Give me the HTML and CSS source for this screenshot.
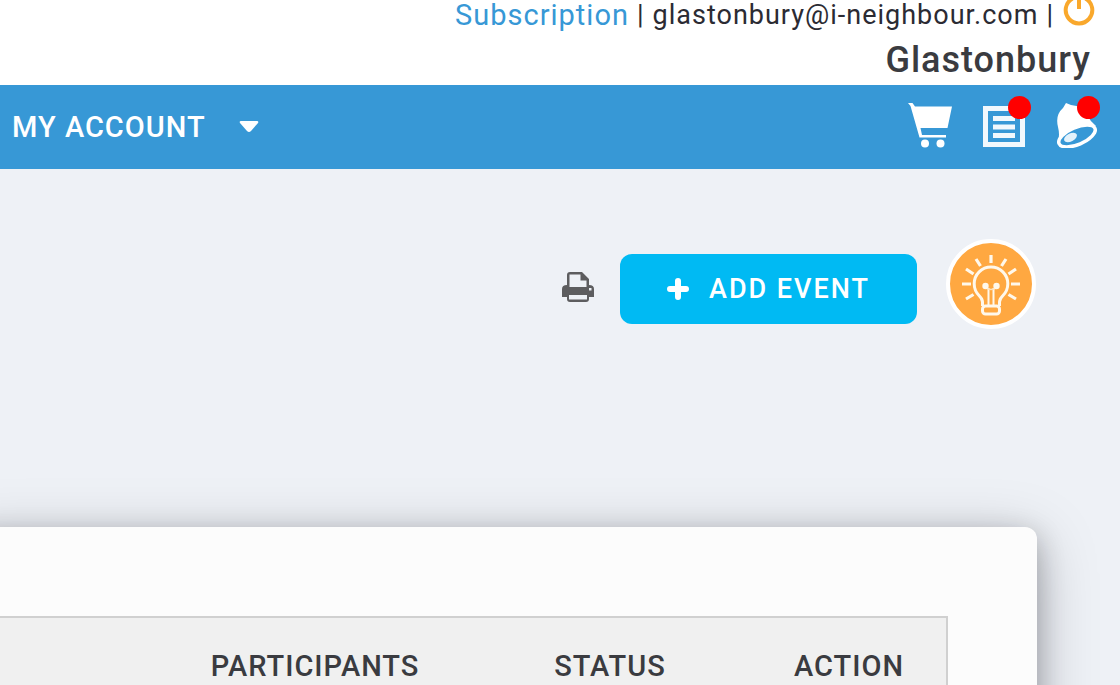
FILE: index.html
```html
<!DOCTYPE html>
<html lang="en">
<head>
<meta charset="utf-8">
<title>Events</title>
<link rel="stylesheet" href="styles.css">
</head>
<body>
<header class="header">
  <div class="user-line">
    <a class="link" href="#">Subscription</a>
    <span>|</span>
    <span>glastonbury@i-neighbour.com</span>
    <span>|</span>
    <button class="icon-button power" aria-label="Log out">
      <svg width="34" height="34" viewBox="0 0 34 34" fill="none" stroke="#f9a82c" stroke-width="4"><path d="M10.5 6.5A13.3 13.3 0 1 0 23.500 6.500M17 1V17"/></svg>
    </button>
  </div>
  <div class="site-name">Glastonbury</div>
</header>
<nav class="navbar">
  <button class="account">MY ACCOUNT
    <svg width="20" height="12" viewBox="0 0 20 12" fill="#fff"><path d="M2 0H18Q20 0 19 2L12 10Q10 12 8 10L1 2Q0 0 2 0Z"/></svg>
  </button>
  <div class="nav-icons">
    <button class="icon-button" aria-label="Cart">
      <svg width="44" height="46" viewBox="0 0 44 46"><path fill="#fff" d="M0 1H4.500L7 4.500H44L39.500 26H12.500L14 33H38V35.500H11.500L2.500 4Z"/><circle cx="17" cy="41.500" r="4" fill="#fff"/><circle cx="32.500" cy="41.500" r="4" fill="#fff"/></svg>
    </button>
    <button class="icon-button" aria-label="News">
      <svg width="42" height="46" viewBox="0 0 42 46"><path fill="none" stroke="#f1f8fd" stroke-width="5" d="M2.500 6.500H39.500V42.500H2.500Z"/><path stroke="#f1f8fd" stroke-width="5" d="M10 16.500H32M10 25H32M10 33.500H32"/></svg>
      <i class="dot"></i>
    </button>
    <button class="icon-button" aria-label="Notifications">
      <svg width="42" height="46" viewBox="0 0 42 46"><path fill="#fff" d="M7 6L10 1L15 3Q27 4 31 13Q34 19 40 24Q36 23 28 26Q11 29 2 39Q4 33 2 25Q-1 13 7 6Z"/><ellipse cx="21" cy="34" rx="19.500" ry="8.500" transform="rotate(-23 21 34)" fill="#3798d6" stroke="#fff" stroke-width="3.500"/><ellipse cx="14.500" cy="35.500" rx="7" ry="4" transform="rotate(-28 14.500 35.500)" fill="#e4f2fb"/></svg>
      <i class="dot dot-inset"></i>
    </button>
  </div>
</nav>
<main class="main">
  <div class="toolbar">
    <button class="icon-button print" aria-label="Print">
      <svg width="32" height="30" viewBox="0 0 32 30"><path fill="#5d5d5f" fill-rule="evenodd" d="M5 13V3Q5 0 8 0H20L27 7V13Q32 13 32 17V25H27V27Q27 30 24 30H8Q5 30 5 27V25H0V17Q0 13 5 13ZM7.500 2.500V15H24.500V8.500H18.500V2.500ZM7 23V27.500H25V23ZM27 16V18.500H29.500V16Z"/></svg>
    </button>
    <button class="add">
      <svg width="22" height="22" viewBox="0 0 22 22"><path stroke="#fff" stroke-width="6" stroke-linecap="round" d="M11 3V19M3 11H19"/></svg>
      ADD EVENT
    </button>
    <button class="icon-button tip" aria-label="Tips">
      <svg width="90" height="90" viewBox="0 0 90 90" fill="none" stroke="#fff8eb" stroke-width="3"><circle cx="45" cy="45" r="43" fill="#ffa841" stroke="#fff" stroke-width="4"/><path d="M36.500 67V63Q36.500 60 33 56.500A16.800 16.800 0 1 1 57 56.500Q53.500 60 53.500 63V67"/><rect x="36.500" y="67" width="17" height="8" rx="3"/><path stroke-width="2" d="M42.500 66V49M47.500 66V49"/><path stroke-width="1.500" stroke="#ffe0b8" d="M38 48Q45 53 52 48"/><g fill="#fff8eb" stroke="none"><circle cx="39.500" cy="47" r="3.200"/><circle cx="50.500" cy="47" r="3.200"/></g><path stroke-width="3.200" d="M45 16V24M30 20L34.500 27M60 20L55.500 27M20 30L27.500 35M70 30L62.500 35M16 45H25M65 45H74M20 60L27.500 55.500M70 60L62.500 55.500"/></svg>
    </button>
  </div>
  <section class="card">
    <table class="events">
      <thead><tr><th></th><th class="participants">PARTICIPANTS</th><th class="status">STATUS</th><th class="action">ACTION</th></tr></thead>
    </table>
  </section>
</main>
</body>
</html>
```
FILE: styles.css
```css
* { box-sizing: border-box; }
body {
  margin: 0;
  min-height: 100vh;
  display: flex;
  flex-direction: column;
  background: #eef1f6;
  color: #3a3b40;
  font-family: Roboto, "Liberation Sans", sans-serif;
  font-size: 29px;
  line-height: 32px;
  letter-spacing: 1px;
}
button {
  font: inherit;
  letter-spacing: inherit;
  color: #fff;
  background: none;
  border: 0;
  padding: 0;
  cursor: pointer;
}
svg { display: block; }
.header {
  height: 85px;
  padding-right: 24px;
  background: #fff;
  text-align: right;
}
.user-line {
  display: flex;
  justify-content: flex-end;
  align-items: center;
  gap: 8px;
  height: 30px;
  color: #2b2b33;
  font-size: 27px;
}
.link {
  color: #3798d6;
  font-size: 29px;
  text-decoration: none;
}
.power { align-self: flex-start; margin-top: -8px; }
.site-name {
  margin-top: 10px;
  padding-right: 5px;
  font-size: 36px;
  line-height: 40px;
  font-weight: 500;
}
.navbar {
  display: flex;
  justify-content: space-between;
  align-items: center;
  height: 84px;
  padding: 0 22px 0 12px;
  background: #3798d6;
}
.account {
  display: flex;
  align-items: center;
  gap: 33px;
  font-weight: 500;
}
.nav-icons {
  display: flex;
  gap: 31px;
  padding-bottom: 4px;
}
.icon-button { position: relative; }
.dot {
  position: absolute;
  top: -6px;
  right: -6px;
  width: 23px;
  height: 23px;
  border-radius: 50%;
  background: #f00;
}
.dot-inset { right: -2px; }
.main { flex: 1; overflow: hidden; }
.toolbar {
  display: flex;
  justify-content: flex-end;
  align-items: center;
  padding: 70px 84px 0 0;
}
.print { margin: 6px 26px 0 0; }
.add {
  display: flex;
  align-items: center;
  justify-content: center;
  gap: 20px;
  width: 297px;
  height: 70px;
  margin: 10px 29px 0 0;
  border-radius: 12px;
  background: #00baf3;
  font-size: 27px;
  font-weight: 500;
  letter-spacing: 2px;
}
.card {
  height: 300px;
  margin: 198px 83px -142px -40px;
  padding: 89px 89px 0 0;
  border-radius: 12px;
  background: #fcfcfc;
  box-shadow: 0 14px 60px rgba(0, 0, 20, 0.25), 0 8px 28px rgba(0, 0, 0, 0.24);
}
.events {
  width: 100%;
  table-layout: fixed;
  border: 2px solid #d0d0d0;
  border-collapse: separate;
  border-spacing: 0;
  background: #f0f0f0;
}
.events th {
  padding: 32px 0 40px;
  font-weight: 500;
  text-align: center;
}
.participants { width: 306px; }
.status { width: 284px; }
.action { width: 194px; }
```
